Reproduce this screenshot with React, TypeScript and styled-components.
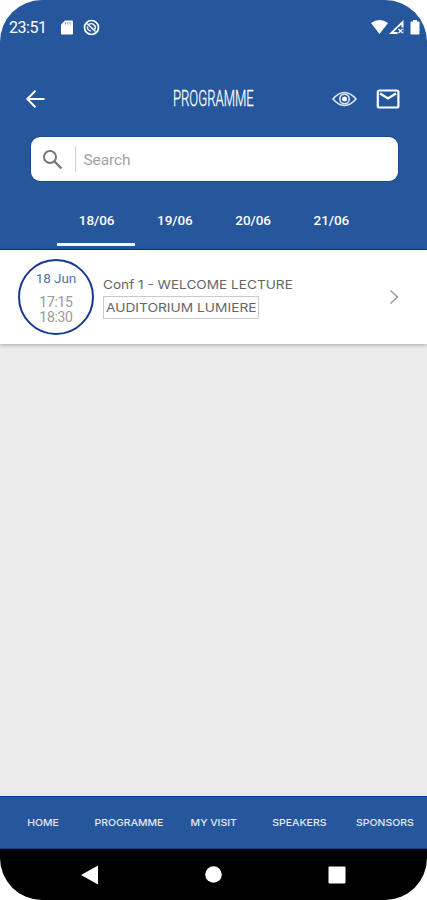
import React from "react";
import styled, { createGlobalStyle } from "styled-components";

const BLUE = "#26569c";
const EDGE = "#063a8c";

const GlobalStyle = createGlobalStyle`
  body { margin: 0; background: #fff; }
  * { box-sizing: border-box; }
  svg { display: block; flex: none; }
`;

const Screen = styled.div`
  width: 427px;
  height: 900px;
  display: flex;
  flex-direction: column;
  overflow: hidden;
  border-radius: 42px;
  background: #ebebeb;
  font-family: Roboto, sans-serif;
`;

const Header = styled.header`
  height: 250px;
  flex: none;
  background: ${BLUE};
  border-bottom: 1px solid ${EDGE};
  color: #fff;
  display: flex;
  flex-direction: column;
`;

const StatusBar = styled.div`
  height: 54px;
  display: flex;
  align-items: center;
  padding: 0 6px 0 9px;
`;

const Clock = styled.span`
  width: 52px;
  font-size: 16px;
  line-height: 20px;
  padding-top: 2px;
  letter-spacing: -0.45px;
`;

const StatusGroup = styled.div<{ $gap: number; $end?: boolean }>`
  display: flex;
  align-items: center;
  gap: ${(p) => p.$gap}px;
  margin-left: ${(p) => (p.$end ? "auto" : "0")};
`;

const TitleBar = styled.div`
  height: 83px;
  padding: 6px 26px 0 25px;
  display: grid;
  grid-template-columns: 69px 1fr 69px;
  align-items: center;
`;

const Title = styled.h1`
  margin: 0;
  justify-self: center;
  font-size: 22px;
  line-height: 26px;
  font-weight: 300;
  -webkit-text-stroke: 0.3px #fff;
  transform: translateX(0.5px) scaleX(0.595);
`;

const Actions = styled.div`
  display: flex;
  align-items: center;
  gap: 19px;
`;

const SearchBox = styled.div`
  height: 44px;
  margin: 0 29.5px 0 30.5px;
  border-radius: 9px;
  background: #fff;
  box-shadow: 0 0 0 1px ${EDGE}66;
  display: flex;
  align-items: center;
  padding-left: 11px;
`;

const SearchDivider = styled.span`
  width: 1px;
  height: 26px;
  margin: 0 8px 0 12px;
  background: #d2d2d2;
`;

const Placeholder = styled.span`
  color: #a2a2a2;
  font-size: 15.5px;
  letter-spacing: -0.1px;
  padding-top: 2px;
`;

const Tabs = styled.nav`
  margin: 25px 57px 0;
  height: 40px;
  display: grid;
  grid-template-columns: repeat(4, 1fr);
`;

const Tab = styled.span<{ $active?: boolean }>`
  display: flex;
  justify-content: center;
  padding: 5px 0 0 1px;
  font-size: 13.5px;
  line-height: 18px;
  font-weight: 500;
  letter-spacing: -0.05px;
  border-bottom: 3px solid ${(p) => (p.$active ? "#f4f7fd" : "transparent")};
`;

const Session = styled.article`
  height: 94px;
  flex: none;
  background: #fff;
  box-shadow: 0 1px 4px rgba(0, 0, 0, 0.3);
  display: flex;
  align-items: center;
  padding: 0 27px 0 18px;
`;

const TimeBadge = styled.div`
  width: 76px;
  height: 76px;
  border: 2px solid #153a91;
  border-radius: 50%;
  text-align: center;
  font-size: 14px;
  line-height: 15.5px;
  letter-spacing: -0.3px;
  color: #999;
  padding-top: 10px;
`;

const Day = styled.div`
  color: #5871aa;
  font-size: 13.5px;
  margin-bottom: 8px;
  letter-spacing: -0.1px;
`;

const Details = styled.div`
  margin-left: 9px;
  flex: 1;
  display: flex;
  flex-direction: column;
  align-items: flex-start;
  color: #666;
  font-family: Inter, sans-serif;
  font-size: 12px;
`;

const Fit = styled.span<{ $w: number; $scale: number }>`
  display: block;
  width: ${(p) => p.$w}px;
  white-space: nowrap;
  transform: scaleX(${(p) => p.$scale});
  transform-origin: left center;
`;

const SessionName = styled.div`
  line-height: 18px;
  margin-bottom: 2px;
`;

const Room = styled.div`
  height: 23px;
  border: 1px solid #c9c9cf;
  padding-left: 2px;
  line-height: 22px;
`;

const Empty = styled.main`
  flex: 1;
`;

const BottomBar = styled.nav`
  height: 53px;
  flex: none;
  background: ${BLUE};
  border-top: 1px solid ${EDGE};
  border-bottom: 1px solid #18427e;
  display: grid;
  grid-template-columns: repeat(5, 1fr);
  align-items: center;
  padding-bottom: 1px;
`;

const BottomItem = styled.span`
  justify-self: center;
  color: #e4eaf6;
  font-family: Inter, sans-serif;
  font-size: 9.5px;
  font-weight: 500;
  white-space: nowrap;
  transform: translateX(0.7px) scaleX(1.1);
`;

const SystemNav = styled.div`
  height: 51px;
  flex: none;
  background: #000;
  display: flex;
  align-items: center;
  justify-content: space-between;
  padding: 0 81px;
`;

export default function App() {
  return (
    <>
      <GlobalStyle />
      <Screen>
        <Header>
          <StatusBar>
            <Clock>23:51</Clock>
            <StatusGroup $gap={10}>
              <svg width="12" height="15" viewBox="0 0 12 15">
                <path fill="#fff" d="M4 .5h7.2q.8 0 .8.8v12.4q0 .8-.8.8H.8q-.8 0-.8-.8V4.5z" />
                <path stroke={BLUE} strokeOpacity=".6" strokeWidth="1" d="M4.500 2v2.500M6.800 2v2.500M9.100 2v2.500" />
              </svg>
              <svg width="17" height="17" viewBox="0 0 17 17" fill="none" stroke="#fff">
                <circle cx="8.500" cy="8.500" r="7" strokeWidth="1.700" />
                <path d="M4 4.500l8.500 8" strokeWidth="1.600" />
                <path d="M6 5.200q3.500-1.600 5.500 1.300t-.3 3.500M4.600 7.500q-.8 4 3.600 4.600" strokeWidth="1.400" />
              </svg>
            </StatusGroup>
            <StatusGroup $gap={1} $end>
              <svg width="17" height="14" viewBox="0 0 17 14">
                <path fill="#fff" d="M0 3Q8.500-3 17 3L8.500 14z" />
              </svg>
              <svg width="15" height="14" viewBox="0 0 15 14">
                <path fill="#fff" d="M14.500 0V14H0z" />
                <path fill={BLUE} d="M12.500 4.500V8H9v4H4.500z" />
                <path fill={BLUE} d="M8.500 7.500h6V14h-6z" />
                <path stroke="#fff" strokeWidth="1.200" d="M9.500 9l4 4M13.500 9l-4 4" />
              </svg>
              <svg width="16" height="15" viewBox="0 0 16 15">
                <path fill="#fff" d="M8 0h4v1.500h1.800q.7 0 .7.7v11.600q0 .7-.7.7H6.200q-.7 0-.7-.7V2.200q0-.7.7-.7H8z" />
              </svg>
            </StatusGroup>
          </StatusBar>
          <TitleBar>
            <svg width="21" height="20" viewBox="0 0 21 20" fill="none" stroke="#fff" strokeWidth="2">
              <path d="M19.500 10H3M10.500 1.800L2.300 10l8.200 8.200" />
            </svg>
            <Title>PROGRAMME</Title>
            <Actions>
              <svg width="25" height="16" viewBox="0 0 25 16" fill="none" stroke="#dfe8f7" strokeWidth="1.600">
                <path d="M1 8Q6.500 1.500 12.500 1.500T24 8Q18.500 14.500 12.500 14.500T1 8z" />
                <circle cx="12.500" cy="8" r="4.700" />
                <circle cx="12.500" cy="8" r="2.500" fill="#fff" stroke="none" />
              </svg>
              <svg width="24" height="20" viewBox="0 0 24 20" fill="none" stroke="#fff" strokeWidth="2.200">
                <rect x="1.800" y="1.500" width="20.600" height="17" rx="1.500" />
                <path d="M4 4.500l8 5 8-5" />
              </svg>
            </Actions>
          </TitleBar>
          <SearchBox>
            <svg width="21" height="21" viewBox="0 0 21 21" fill="none" stroke="#777" strokeWidth="2">
              <circle cx="8" cy="8" r="6" />
              <path d="M12.500 12.500l7 7" strokeWidth="2.400" />
            </svg>
            <SearchDivider />
            <Placeholder>Search</Placeholder>
          </SearchBox>
          <Tabs>
            <Tab $active>18/06</Tab>
            <Tab>19/06</Tab>
            <Tab>20/06</Tab>
            <Tab>21/06</Tab>
          </Tabs>
        </Header>
        <Session>
          <TimeBadge>
            <Day>18 Jun</Day>
            <div>17:15</div>
            <div>18:30</div>
          </TimeBadge>
          <Details>
            <SessionName>
              <Fit $w={190} $scale={1.135}>Conf 1 - WELCOME LECTURE</Fit>
            </SessionName>
            <Room>
              <Fit $w={152} $scale={1.145}>AUDITORIUM LUMIERE</Fit>
            </Room>
          </Details>
          <svg width="11" height="16" viewBox="0 0 11 16" fill="none" stroke="#999" strokeWidth="1.500">
            <path d="M1.500 1.500L8.500 8l-7 6.500" />
          </svg>
        </Session>
        <Empty />
        <BottomBar>
          <BottomItem>HOME</BottomItem>
          <BottomItem>PROGRAMME</BottomItem>
          <BottomItem>MY VISIT</BottomItem>
          <BottomItem>SPEAKERS</BottomItem>
          <BottomItem>SPONSORS</BottomItem>
        </BottomBar>
        <SystemNav>
          <svg width="17" height="20" viewBox="0 0 17 20">
            <path fill="#fff" d="M17 .5v19L0 10z" />
          </svg>
          <svg width="18" height="18" viewBox="0 0 18 18">
            <circle cx="9.500" cy="8.500" r="8.300" fill="#fff" />
          </svg>
          <svg width="18" height="18" viewBox="0 0 18 18">
            <rect x=".5" y=".5" width="17" height="17" rx="1" fill="#fff" />
          </svg>
        </SystemNav>
      </Screen>
    </>
  );
}
